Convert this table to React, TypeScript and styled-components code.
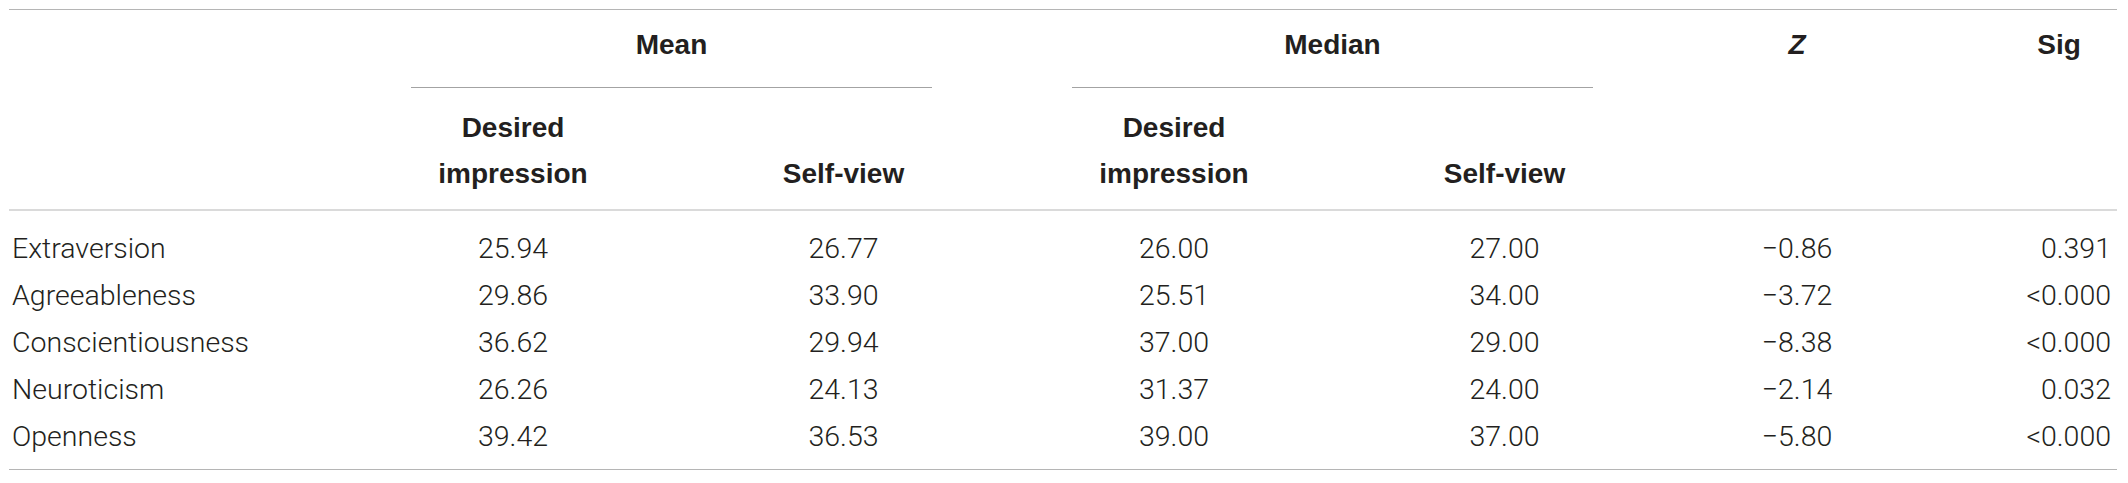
import React from "react";
import styled, { createGlobalStyle } from "styled-components";

const GlobalStyle = createGlobalStyle`
  html, body {
    margin: 0;
    padding: 0;
    background: #ffffff;
  }
  body {
    font-family: "Liberation Sans", Arial, Helvetica, sans-serif;
  }
`;

const Page = styled.div`
  width: 2128px;
  box-sizing: border-box;
  padding: 9px 11px 0 9px;
`;

const Table = styled.div`
  display: grid;
  grid-template-columns: 262px 204px 177px 204px 177px 128px 116px;
  column-gap: 140px;
  border-top: 1px solid #b5b5b5;
  border-bottom: 1.5px solid #b5b5b5;
  font-size: 28px;
`;

const GroupHead = styled.div<{ $span: string }>`
  grid-column: ${(p) => p.$span};
  padding: 12px 0 19px;
  line-height: 46px;
  text-align: center;
  font-weight: 700;
  color: #231f20;
  border-bottom: 1.5px solid #a3a3a3;
`;

const TopHead = styled.div<{ $italic?: boolean }>`
  padding: 12px 0 0;
  line-height: 46px;
  text-align: center;
  font-weight: 700;
  font-style: ${(p) => (p.$italic ? "italic" : "normal")};
  color: #231f20;
`;

const SubHead = styled.div`
  padding: 17px 0 12px;
  line-height: 46px;
  text-align: center;
  font-weight: 700;
  color: #231f20;
  align-self: end;
`;

const Divider = styled.div`
  grid-column: 1 / -1;
  height: 2px;
  background: #dadada;
`;

const Body = styled.div`
  grid-column: 1 / -1;
  display: grid;
  grid-template-columns: subgrid;
  padding: 14px 0 9px;
`;

const Cell = styled.div<{ $align: "left" | "center" | "right" }>`
  font-family: Roboto, "Liberation Sans", Arial, sans-serif;
  font-weight: 300;
  font-size: 28.5px;
  line-height: 47px;
  height: 47px;
  color: #231f20;
  text-align: ${(p) => p.$align};
  padding-left: ${(p) => (p.$align === "left" ? "3px" : "0")};
  padding-right: ${(p) => (p.$align === "right" ? "6px" : "0")};
  white-space: nowrap;
`;

const Empty = styled.div``;

type Row = {
  label: string;
  values: [string, string, string, string, string, string];
};

const rows: Row[] = [
  { label: "Extraversion", values: ["25.94", "26.77", "26.00", "27.00", "\u22120.86", "0.391"] },
  { label: "Agreeableness", values: ["29.86", "33.90", "25.51", "34.00", "\u22123.72", "<0.000"] },
  { label: "Conscientiousness", values: ["36.62", "29.94", "37.00", "29.00", "\u22128.38", "<0.000"] },
  { label: "Neuroticism", values: ["26.26", "24.13", "31.37", "24.00", "\u22122.14", "0.032"] },
  { label: "Openness", values: ["39.42", "36.53", "39.00", "37.00", "\u22125.80", "<0.000"] },
];

export default function App() {
  return (
    <>
      <GlobalStyle />
      <Page>
        <Table>
          <Empty />
          <GroupHead $span="2 / 4">Mean</GroupHead>
          <GroupHead $span="4 / 6">Median</GroupHead>
          <TopHead $italic>Z</TopHead>
          <TopHead>Sig</TopHead>

          <Empty />
          <SubHead>
            Desired
            <br />
            impression
          </SubHead>
          <SubHead>Self-view</SubHead>
          <SubHead>
            Desired
            <br />
            impression
          </SubHead>
          <SubHead>Self-view</SubHead>
          <Empty />
          <Empty />

          <Divider />

          <Body>
            {rows.map((r) => (
              <React.Fragment key={r.label}>
                <Cell $align="left">{r.label}</Cell>
                {r.values.map((v, i) => (
                  <Cell key={i} $align={i === 5 ? "right" : "center"}>
                    {v}
                  </Cell>
                ))}
              </React.Fragment>
            ))}
          </Body>
        </Table>
      </Page>
    </>
  );
}
